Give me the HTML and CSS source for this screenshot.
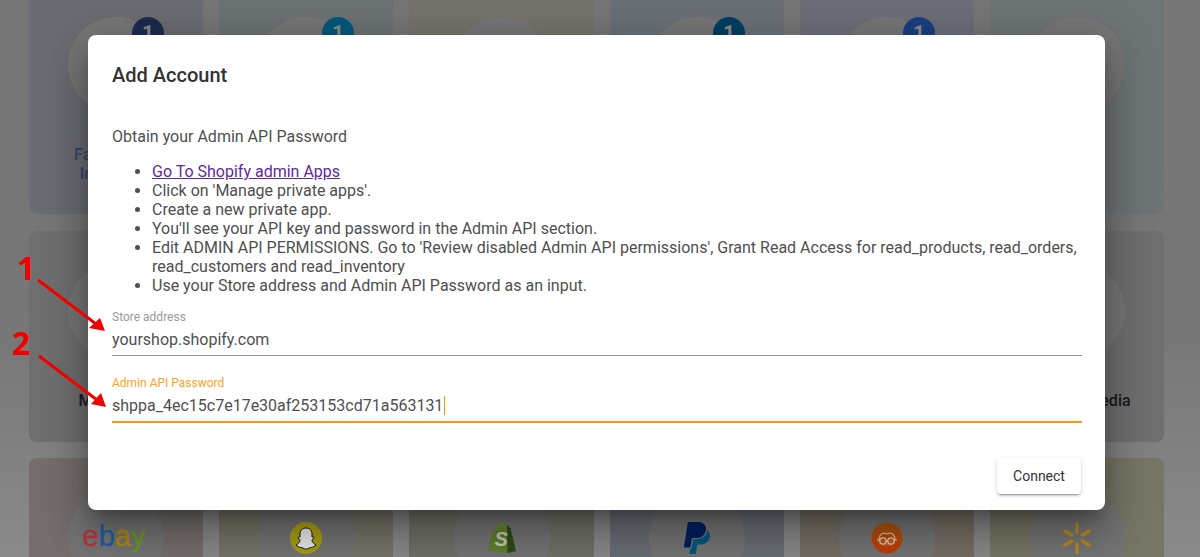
FILE: index.html
```html
<!DOCTYPE html>
<html lang="en">
<head>
<meta charset="utf-8">
<title>Add Account</title>
<link rel="stylesheet" href="styles.css">
</head>
<body>
<main class="grid">
  <section class="card c-a"><div class="disc"><span class="badge b-a">1</span></div><p class="name name-fb">Facebook &amp; Instagram</p></section>
  <section class="card c-b"><div class="disc"><span class="badge b-b">1</span></div></section>
  <section class="card c-c"><div class="disc"></div></section>
  <section class="card c-d"><div class="disc"><span class="badge b-d">1</span></div></section>
  <section class="card c-e"><div class="disc"><span class="badge b-e">1</span></div></section>
  <section class="card c-f"><div class="disc"></div></section>

  <section class="card c-g"><div class="disc"></div><p class="name">Mailchimp</p></section>
  <section class="card c-g"><div class="disc"></div></section>
  <section class="card c-g"><div class="disc"></div></section>
  <section class="card c-g"><div class="disc"></div></section>
  <section class="card c-g"><div class="disc"></div></section>
  <section class="card c-g"><div class="disc"></div><p class="name">Amazon Media</p></section>

  <section class="card c-h"><div class="disc disc-low">
    <span class="logo ebay"><span class="e-r">e</span><span class="e-b">b</span><span class="e-y">a</span><span class="e-g">y</span></span>
  </div></section>
  <section class="card c-i"><div class="disc disc-low">
    <svg class="logo" width="32" height="32" viewBox="0 0 32 32"><circle cx="16" cy="16" r="16" fill="#a89f12"/><path d="M16 6C12 6 10 9 10 12L10 15C9 15 8 15 8 16C8 17 10 17 10 18C10 20 8 22 6 23C6 24 8 24 9 25C10 26 11 25 13 26C14 27 15 27 16 27C17 27 18 27 19 26C21 25 22 26 23 25C24 24 26 24 26 23C24 22 22 20 22 18C22 17 24 17 24 16C24 15 23 15 22 15L22 12C22 9 20 6 16 6Z" fill="#e8e8e8" stroke="#111" stroke-width="1"/></svg>
  </div></section>
  <section class="card c-j"><div class="disc disc-low">
    <svg class="logo" width="28" height="32" viewBox="0 0 28 32"><path d="M0 28.500L4.500 8.500L9 6.500C10 3 12 .8 14.500 .8C16 .8 17 1.500 17.800 3L19 3L22.500 6L28 29L21 31Z" fill="#5d7f2b"/><path d="M19 3L22.500 6.200L28 29L19.500 31Z" fill="#2c4a1c"/><path d="M9 7C10 3.500 12 1.700 14 1.700C16 1.700 16.800 3.500 17 6.500M12 6.200C13 3.500 15 2.500 17 3.200" fill="none" stroke="#6f8f38" stroke-width="1.200"/><text class="bag-s" x="6.500" y="24">S</text></svg>
  </div></section>
  <section class="card c-k"><div class="disc disc-low">
    <svg class="logo" width="32" height="32" viewBox="0 0 24 24"><path d="M19.790 6.142c-.01.087-.01.175-.023.261a7.760 7.760 0 0 1-7.695 6.598H9.007l-.283 1.795-.013.083-.692 4.390-.134.843-.014.088H6.860l-.497 3.150a.562.562 0 0 0 .555.650h3.612c.340 0 .630-.249.683-.585l.952-6.031a.692.692 0 0 1 .683-.584h2.126a6.793 6.793 0 0 0 6.707-5.752c.306-1.950-.466-3.744-1.890-4.906z" fill="#00587f"/><path d="M7.016 19.198h-4.200a.562.562 0 0 1-.555-.650L5.093.584A.692.692 0 0 1 5.776 0h7.222c3.417 0 5.904 2.488 5.846 5.500-.006.250-.027.500-.066.747A6.794 6.794 0 0 1 12.071 12H8.743a.690.690 0 0 0-.682.583l-.325 2.056-.013.083-.692 4.390-.015.087z" fill="#00205f"/></svg>
  </div></section>
  <section class="card c-l"><div class="disc disc-low">
    <svg class="logo" width="32" height="32" viewBox="0 0 32 32"><defs><linearGradient id="ob" x1="0" y1="0" x2="0" y2="1"><stop offset="0" stop-color="#a8560f"/><stop offset="1" stop-color="#c23c08"/></linearGradient></defs><circle cx="16" cy="16" r="15.500" fill="url(#ob)"/><path d="M8 18C8 12 12 10 16 12C20 10 24 12 24 18" fill="none" stroke="#e0b890" stroke-width="1.200"/><path d="M8 18C8 27 24 27 24 18" fill="#d07a3a" fill-opacity=".35"/><circle cx="12" cy="19" r="3.200" fill="none" stroke="#e8d0b8" stroke-width="1.200"/><circle cx="20" cy="19" r="3.200" fill="none" stroke="#e8d0b8" stroke-width="1.200"/><path d="M15 19H17M6 18H9M23 18H26" stroke="#e8d0b8" stroke-width="1.200"/></svg>
  </div></section>
  <section class="card c-m"><div class="disc disc-low">
    <svg class="logo" width="32" height="32" viewBox="-16 -16 32 32"><g stroke="#b88a20" stroke-width="3.400" stroke-linecap="round"><path d="M0-14V-6M0 14V6M12.100-7 5.200-3M-12.100 7-5.200 3M12.100 7 5.200 3M-12.100-7-5.200-3"/></g></svg>
  </div></section>
</main>

<div class="backdrop"></div>

<div class="dialog-wrap">
  <div class="dialog" role="dialog" aria-labelledby="dlg-title">
    <h2 class="dialog-title" id="dlg-title">Add Account</h2>
    <div class="dialog-content">
      <p class="intro">Obtain your Admin API Password</p>
      <ul class="steps">
        <li><a class="link" href="#">Go To Shopify admin Apps</a></li>
        <li>Click on 'Manage private apps'.</li>
        <li>Create a new private app.</li>
        <li>You'll see your API key and password in the Admin API section.</li>
        <li>Edit ADMIN API PERMISSIONS. Go to 'Review disabled Admin API permissions', Grant Read Access for read_products, read_orders, read_customers and read_inventory</li>
        <li>Use your Store address and Admin API Password as an input.</li>
      </ul>
      <div class="field">
        <div class="field-label">Store address</div>
        <div class="field-value">yourshop.shopify.com</div>
      </div>
      <div class="field field-focus">
        <div class="field-label">Admin API Password</div>
        <div class="field-value"><span class="caret">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</span></div>
      </div>
    </div>
    <div class="dialog-actions">
      <button class="btn" type="button">Connect</button>
    </div>
  </div>
</div>

<span class="mark mark-1">1</span>
<span class="mark mark-2">2</span>
<svg class="arrows" width="120" height="420" viewBox="0 0 120 420">
  <path d="M38 280L96 324M39 356L97 400" stroke="#f00000" stroke-width="3" fill="none"/>
  <path d="M105 331L89 328L100 318Z" fill="#f00000"/>
  <path d="M106 407L91 404L101 393Z" fill="#f00000"/>
</svg>
</body>
</html>
```

FILE: styles.css
```css
* { box-sizing: border-box; }

html, body {
  margin: 0;
  height: 557px;
  overflow: hidden;
}

body {
  position: relative;
  background: linear-gradient(180deg, #dadada 0%, #dcdcdc 60%, #ffffff 100%);
  font-family: Roboto, "Liberation Sans", sans-serif;
  color: #333;
}

/* page behind the dialog */
.grid {
  display: grid;
  grid-template-columns: 174px 174px 185px 174px 174px 174px;
  grid-template-rows: 229px 211px 211px;
  column-gap: 16px;
  row-gap: 16.5px;
  height: 572px;
  margin-top: -15px;
  padding-left: 29px;
  overflow: hidden;
}

.card {
  display: flex;
  flex-direction: column;
  align-items: center;
  padding-top: 32px;
  border-radius: 8px;
}

.c-a { background: #c4c8d3; }
.c-b { background: #c8d3d7; }
.c-c { background: #dad3c8; }
.c-d { background: #c4cfda; }
.c-e { background: #c8ccde; }
.c-f { background: #ccd7da; }
.c-g { background: #cdcdcd; }
.c-h { background: #d8c9c9; }
.c-i { background: #d6d6c0; }
.c-j { background: #cdd1be; }
.c-k { background: #c2c9d8; }
.c-l { background: #d8ccba; }
.c-m { background: #dcd8bb; }

.disc {
  position: relative;
  display: flex;
  align-items: center;
  justify-content: center;
  flex: none;
  width: 96px;
  height: 96px;
  border-radius: 50%;
  background: #dcdcdc;
}

.disc-low { background: #d6d6d6; }

.badge {
  position: absolute;
  top: 0;
  right: 0;
  width: 32px;
  height: 32px;
  border-radius: 50%;
  color: #fff;
  font-size: 20px;
  font-weight: 700;
  line-height: 32px;
  text-align: center;
}

.b-a { background: #345092; }
.b-b { background: #00a3e6; }
.b-d { background: #0075b7; }
.b-e { background: #3275eb; }

.name {
  margin: 32px 0 0;
  padding: 0 8px;
  width: 100%;
  color: #333;
  font-size: 16px;
  font-weight: 500;
  line-height: 19px;
  text-align: center;
}

.name-fb { color: #6082cc; padding: 0 40px; }

/* logos sit above the dimming layer, they stay brighter in the reference */
.logo {
  position: relative;
  z-index: 2;
  display: block;
}

.ebay {
  margin: 0 4px 4px 0;
  font-family: "Liberation Sans", Arial, sans-serif;
  font-size: 29px;
  line-height: 32px;
  -webkit-text-stroke: 0.3px currentColor;
}

.e-r { color: #b8353c; }
.e-b { color: #1a5fa8; }
.e-y { color: #b08a10; }
.e-g { color: #6a9a20; }

.bag-s {
  fill: #c8c8b8;
  font-family: "Liberation Sans", Arial, sans-serif;
  font-size: 20px;
  font-weight: 700;
  font-style: italic;
}

.backdrop {
  position: absolute;
  inset: 0;
  z-index: 1;
  background: rgba(0, 0, 0, 0.46);
}

/* dialog */
.dialog-wrap {
  position: absolute;
  inset: 0;
  z-index: 3;
  padding: 35px 95px 0 88px;
}

.dialog {
  display: flex;
  flex-direction: column;
  height: 475px;
  background: #fff;
  border-radius: 8px;
  box-shadow: 0 11px 15px -7px rgba(0, 0, 0, .3), 0 24px 38px 3px rgba(0, 0, 0, .2), 0 9px 46px 8px rgba(0, 0, 0, .16);
}

.dialog-title {
  margin: 0;
  padding: 24px 24px 16px;
  color: #333;
  font-size: 20px;
  font-weight: 500;
  line-height: 32px;
}

.dialog-content {
  flex: 1;
  padding: 20px 24px 0;
  color: #4f4f4f;
  font-size: 16px;
  font-weight: 400;
  line-height: 19px;
}

.intro { margin: 0; }

.steps {
  margin: 16px 0 15px;
  padding-left: 40px;
}

.link { color: #5e2a9e; }

.field {
  margin-right: -1px;
  margin-bottom: 20px;
}

.field-focus { margin-bottom: 0; }

.field-label {
  color: #9a9a9a;
  font-size: 12px;
  font-weight: 400;
  line-height: 14px;
}

.field-value {
  height: 32px;
  padding-top: 6px;
  border-bottom: 1px solid #949494;
  line-height: 19px;
}

.field-focus .field-label { color: #ffa31a; }

.field-focus .field-value {
  height: 33px;
  border-bottom: 2px solid #ff9800;
}

.caret {
  display: inline-block;
  border-right: 1px solid #ff9800;
  padding-right: 1px;
}

.dialog-actions {
  display: flex;
  justify-content: flex-end;
  padding: 16px 24px;
}

.btn {
  width: 84px;
  height: 36px;
  padding: 0 0 1px;
  border: 0;
  border-radius: 4px;
  background: #fff;
  color: #333;
  font-family: inherit;
  font-size: 14px;
  font-weight: 400;
  box-shadow: 0 3px 1px -2px rgba(0, 0, 0, .2), 0 2px 2px 0 rgba(0, 0, 0, .14), 0 1px 5px 0 rgba(0, 0, 0, .12);
}

/* red hand-drawn annotations over the screenshot */
.mark {
  position: absolute;
  z-index: 4;
  color: #f00000;
  font-family: "Open Sans", "Liberation Sans", sans-serif;
  font-size: 32px;
  font-weight: 700;
  line-height: 32px;
}

.mark-1 { left: 17px; top: 252px; }
.mark-2 { left: 12px; top: 327px; }

.arrows {
  position: absolute;
  left: 0;
  top: 0;
  z-index: 4;
}
```
